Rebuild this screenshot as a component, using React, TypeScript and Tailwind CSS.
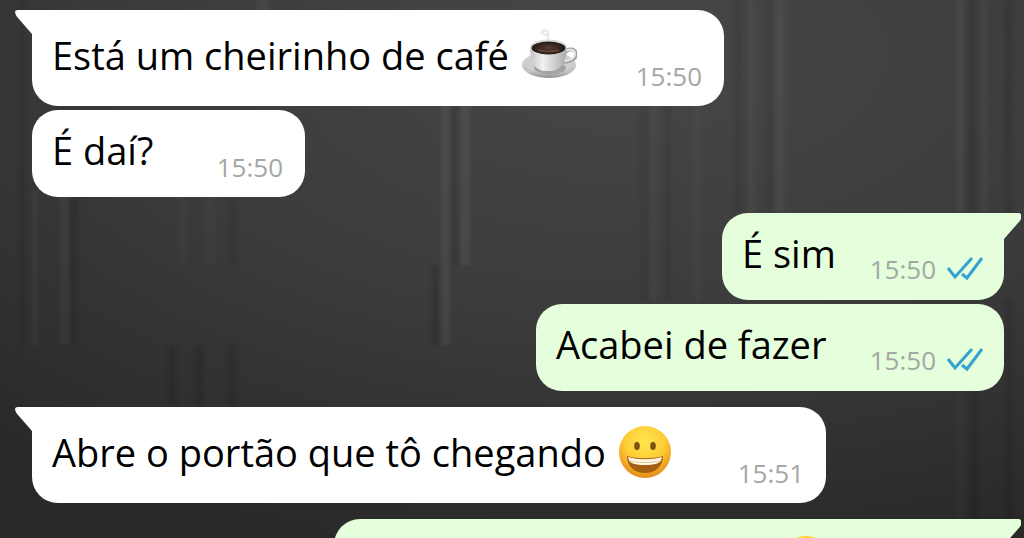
import React from "react";

type Message = {
  side: "in" | "out";
  text: string;
  time: string;
  emoji?: "coffee" | "grin";
  tail?: boolean;
  width: string;
};

const messages: Message[] = [
  { side: "in", text: "Está um cheirinho de café", time: "15:50", emoji: "coffee", tail: true, width: "w-[692px]" },
  { side: "in", text: "É daí?", time: "15:50", width: "w-[273px]" },
  { side: "out", text: "É sim", time: "15:50", tail: true, width: "w-[282px]" },
  { side: "out", text: "Acabei de fazer", time: "15:50", width: "w-[468px]" },
  { side: "in", text: "Abre o portão que tô chegando", time: "15:51", emoji: "grin", tail: true, width: "w-[794px]" },
];

function Coffee() {
  return (
    <svg viewBox="0 0 56 54" className="h-[54px] w-14 shrink-0" role="img" aria-label="café">
      <defs>
        <linearGradient id="cup" x1="0" x2="1" y1="0" y2="0">
          <stop offset="0" stopColor="#c4c4c4" />
          <stop offset=".35" stopColor="#f1f1f1" />
          <stop offset="1" stopColor="#a9a9a9" />
        </linearGradient>
        <linearGradient id="saucer" x1="0" x2="0" y1="0" y2="1">
          <stop offset="0" stopColor="#d9d9d9" />
          <stop offset=".75" stopColor="#c2c2c2" />
          <stop offset="1" stopColor="#929292" />
        </linearGradient>
        <radialGradient id="brew">
          <stop offset="0" stopColor="#5b3b31" />
          <stop offset="1" stopColor="#241a18" />
        </radialGradient>
      </defs>
      <path d="M22 2c5 0 6 3 4 5 2 1 2 3 0 5M21 3c-1 3 3 4 5 4" fill="none" stroke="#ccd2e2" strokeWidth="2.5" strokeLinecap="round" opacity=".45" />
      <ellipse cx="28" cy="37" rx="27" ry="13" fill="url(#saucer)" />
      <ellipse cx="28" cy="35" rx="25" ry="10" fill="#cfcfcf" />
      <ellipse cx="29" cy="40" rx="16" ry="6" fill="#a2a2a2" />
      <path d="M44 25c2-5 11-5 11 1 0 6-7 8-13 8" fill="none" stroke="#a2a2a2" strokeWidth="3.6" />
      <path d="M44 25c2-5 10-4 10 1 0 5-7 7-12 7" fill="none" stroke="#e8e8e8" strokeWidth="1.8" />
      <path d="M9 19c0 11 3 22 13 24h10c10-2 14-13 14-24z" fill="url(#cup)" />
      <ellipse cx="27.5" cy="19" rx="18.5" ry="7.5" fill="#dcdcdc" />
      <ellipse cx="27.5" cy="20" rx="17" ry="6.5" fill="url(#brew)" />
      <path d="M17 22c5 2 15 2 21 0" fill="none" stroke="#7c5141" strokeWidth="1.5" opacity=".7" />
    </svg>
  );
}

function Grin() {
  return (
    <svg viewBox="0 0 54 54" className="size-[54px] shrink-0" role="img" aria-label="sorriso">
      <defs>
        <radialGradient id="face" cx=".5" cy=".3" r=".7">
          <stop offset="0" stopColor="#ffe64e" />
          <stop offset=".55" stopColor="#fdcc35" />
          <stop offset="1" stopColor="#e58b1b" />
        </radialGradient>
      </defs>
      <circle cx="27" cy="27" r="26" fill="url(#face)" />
      <ellipse cx="19" cy="21" rx="2.8" ry="4" fill="#7d4f14" />
      <ellipse cx="35" cy="21" rx="2.8" ry="4" fill="#7d4f14" />
      <path d="M9 31c9 3 27 3 36 0 0 10-7 17-18 17S9 41 9 31z" fill="#a55f14" />
      <path d="M10 32c10 3 24 3 34 0-1 6-5 8-17 8s-16-2-17-8z" fill="#fff7e2" />
      <path d="M11 36c9 2 23 2 32 0" fill="none" stroke="#dfc8a0" strokeWidth="1" />
    </svg>
  );
}

function Checks() {
  return (
    <svg viewBox="0 0 38 26" className="ml-2.5 h-[26px] w-[38px]" role="img" aria-label="lida">
      <g fill="none" stroke="#35a3d0" strokeWidth="3">
        <path d="M2 12l7 9L26 2" />
        <path d="M16 18l5 4L36 2" />
      </g>
    </svg>
  );
}

function Tail({ side }: { side: "in" | "out" }) {
  if (side === "in") {
    return (
      <svg viewBox="0 0 18 27" className="absolute right-full top-0 -mr-px h-[27px] w-[18px]" aria-hidden="true">
        <path d="M18 0H3Q-1 0 .5 4Q1 6 3 8L17 24V27H18z" fill="#fff" />
      </svg>
    );
  }
  return (
    <svg viewBox="0 0 18 28" className="absolute left-full top-0 -ml-px h-7 w-[18px]" aria-hidden="true">
      <path d="M0 0H15Q19 0 18 4V6Q17 8 15 10L1 26V28H0z" fill="#e5fedb" />
    </svg>
  );
}

function Bubble({ message, grouped }: { message: Message; grouped: boolean }) {
  const { side, text, time, emoji, tail, width } = message;
  const shape = !tail ? "rounded-[26px]" : side === "in" ? "rounded-[26px] rounded-tl-none" : "rounded-[26px] rounded-tr-none";
  return (
    <li
      className={`relative flex max-w-full items-end justify-between py-[18px] pl-5 ${width} ${shape} ${
        grouped ? "mt-1" : "mt-4 first:mt-0"
      } ${side === "in" ? "self-start bg-white pr-[22px]" : "self-end bg-[#e5fedb] pr-5"}`}
    >
      {tail && <Tail side={side} />}
      <p className="mb-1.5 flex items-center gap-3 whitespace-nowrap text-[38px] leading-[45px] text-black">
        {text}
        {emoji === "coffee" && <Coffee />}
        {emoji === "grin" && <Grin />}
      </p>
      <span className="flex items-center">
        <time className="text-[26px] leading-6 text-[#a3a8a3]">{time}</time>
        {side === "out" && <Checks />}
      </span>
    </li>
  );
}

// Soft vertical folds of the wallpaper: x, y, width, height, colour, opacity
const folds: [number, number, number, number, string, number][] = [
  [20, 0, 4, 345, "#000", 0.12],
  [32, 190, 6, 155, "#fff", 0.03],
  [60, 190, 9, 155, "#fff", 0.03],
  [71, 190, 7, 155, "#000", 0.1],
  [178, 190, 8, 75, "#fff", 0.02],
  [205, 190, 10, 75, "#fff", 0.02],
  [230, 190, 6, 75, "#000", 0.08],
  [168, 345, 8, 60, "#000", 0.1],
  [195, 345, 8, 60, "#000", 0.12],
  [228, 345, 8, 60, "#000", 0.1],
  [258, 0, 10, 12, "#fff", 0.04],
  [433, 265, 5, 80, "#000", 0.16],
  [441, 100, 9, 245, "#fff", 0.05],
  [452, 100, 5, 165, "#000", 0.1],
  [460, 100, 10, 165, "#fff", 0.05],
  [640, 100, 7, 200, "#000", 0.06],
  [650, 100, 8, 200, "#fff", 0.02],
  [665, 100, 6, 200, "#000", 0.08],
  [693, 100, 8, 200, "#fff", 0.02],
  [735, 0, 6, 212, "#000", 0.1],
  [748, 0, 7, 212, "#fff", 0.03],
  [766, 0, 6, 212, "#000", 0.07],
  [776, 0, 9, 212, "#fff", 0.04],
  [957, 0, 7, 212, "#fff", 0.04],
  [968, 0, 9, 212, "#000", 0.1],
  [981, 0, 6, 212, "#fff", 0.03],
  [1004, 0, 8, 212, "#000", 0.1],
  [957, 390, 7, 130, "#fff", 0.02],
  [970, 390, 8, 130, "#000", 0.1],
  [1006, 300, 6, 220, "#000", 0.1],
];

function Wallpaper() {
  return (
    <svg
      viewBox="0 0 1024 538"
      preserveAspectRatio="none"
      className="absolute inset-0 size-full"
      aria-hidden="true"
    >
      <defs>
        <radialGradient id="wall" cx=".62" cy=".1" r=".95">
          <stop offset="0" stopColor="#474747" />
          <stop offset=".5" stopColor="#3c3c3c" />
          <stop offset="1" stopColor="#292929" />
        </radialGradient>
        <filter id="soft" x="-100%" width="300%">
          <feGaussianBlur stdDeviation="2 1" />
        </filter>
      </defs>
      <rect width="1024" height="538" fill="url(#wall)" />
      {folds.map(([x, y, w, h, fill, opacity], idx) => (
        <rect key={idx} x={x} y={y} width={w} height={h} fill={fill} opacity={opacity} filter="url(#soft)" />
      ))}
    </svg>
  );
}

export default function App() {
  return (
    <main className="relative h-screen overflow-hidden bg-[#3a3a3a] font-['Open_Sans','Noto_Sans',sans-serif]">
      <Wallpaper />
      <ul className="relative flex flex-col pl-8 pr-5 pt-2.5">
        {messages.map((message, idx) => (
          <Bubble
            key={idx}
            message={message}
            grouped={idx > 0 && messages[idx - 1].side === message.side}
          />
        ))}
        {/* Next reply, still below the fold */}
        <li className="relative mt-4 flex w-[670px] max-w-full justify-end self-end rounded-[26px] rounded-tr-none bg-[#e5fedb] pb-6 pr-[171px] pt-4">
          <Tail side="out" />
          <Grin />
        </li>
      </ul>
    </main>
  );
}
